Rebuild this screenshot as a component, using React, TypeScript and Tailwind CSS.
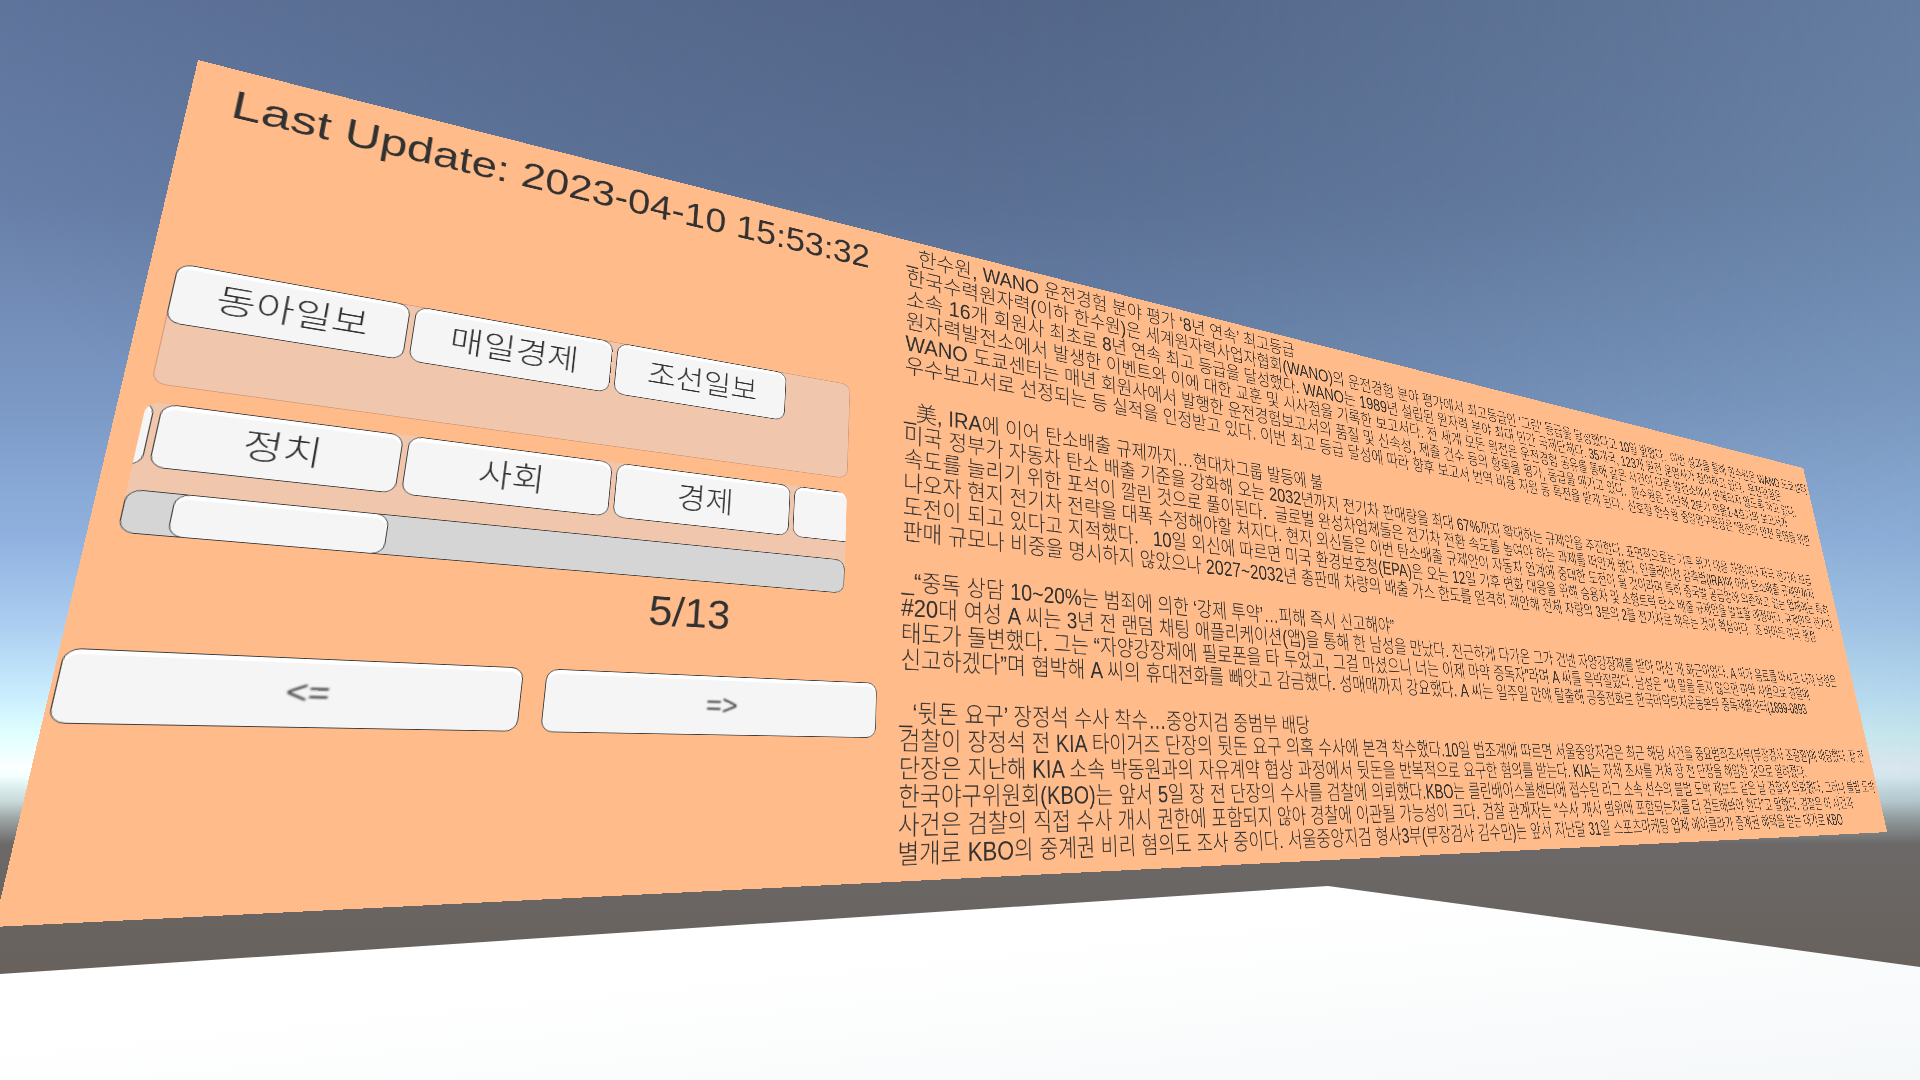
import { useLayoutEffect, useState } from "react";

type Point = [number, number];

const VIEW_W = 1920;
const VIEW_H = 1080;
const BOARD_W = 3720;
const BOARD_H = 1000;

// Screen-space corners of the board for a 1920x1080 view: TL, TR, BR, BL.
const CORNERS: Point[] = [
  [198, 60],
  [1803, 468],
  [1887, 832],
  [-6, 927],
];

// Homography from the board's own rectangle to its four projected corners.
function project([p0, p1, p2, p3]: Point[], w: number, h: number): string {
  const dx1 = p1[0] - p2[0];
  const dx2 = p3[0] - p2[0];
  const sx = p0[0] - p1[0] + p2[0] - p3[0];
  const dy1 = p1[1] - p2[1];
  const dy2 = p3[1] - p2[1];
  const sy = p0[1] - p1[1] + p2[1] - p3[1];
  const den = dx1 * dy2 - dx2 * dy1;
  const g = (sx * dy2 - dx2 * sy) / den;
  const k = (dx1 * sy - sx * dy1) / den;
  const a = p1[0] - p0[0] + g * p1[0];
  const b = p3[0] - p0[0] + k * p3[0];
  const d = p1[1] - p0[1] + g * p1[1];
  const e = p3[1] - p0[1] + k * p3[1];
  const m = [a / w, d / w, 0, g / w, b / h, e / h, 0, k / h, 0, 0, 1, 0, p0[0], p0[1], 0, 1];
  return `matrix3d(${m.join(",")})`;
}

function useCamera() {
  const [size, setSize] = useState({ w: VIEW_W, h: VIEW_H });
  useLayoutEffect(() => {
    const read = () => setSize({ w: window.innerWidth, h: window.innerHeight });
    read();
    window.addEventListener("resize", read);
    return () => window.removeEventListener("resize", read);
  }, []);
  const s = size.h / VIEW_H;
  const shift = (size.w - VIEW_W * s) / 2;
  return project(
    CORNERS.map(([x, y]): Point => [x * s + shift, y * s]),
    BOARD_W,
    BOARD_H,
  );
}

const ARTICLES: string[][] = [
  [
    "_한수원, WANO 운전경험 분야 평가 ‘8년 연속’ 최고등급",
    "한국수력원자력(이하 한수원)은 세계원자력사업자협회(WANO)의 운전경험 분야 평가에서 최고등급인 ‘그린’ 등급을 달성했다고 10일 밝혔다.  이번 성과를 통해 한수원은 WANO 도쿄센터",
    "소속 16개 회원사 최초로 8년 연속 최고 등급을 달성했다. WANO는 1989년 설립된 원자력 분야 최대 민간 국제단체다. 35개국, 123개 원전 운영사가 참여하고 있다.  운전경험은",
    "원자력발전소에서 발생한 이벤트와 이에 대한 교훈 및 시사점을 기록한 보고서다. 전 세계 모든 원전은 운전경험 공유를 통해 같은 사건이 다른 발전소에서 반복되지 않도록 하고 있다.",
    "WANO 도쿄센터는 매년 회원사에서 발행한 운전경험보고서의 품질 및 신속성, 제출 건수 등의 항목을 평가, 등급을 매기고 있다.  한수원은 지난해 2분기 한울1·4호기의 보고서가",
    "우수보고서로 선정되는 등 실적을 인정받고 있다. 이번 최고 등급 달성에 따라 향후 보고서 번역 비용 지원 등 특전을 받게 된다.  신호철 한수원 중앙연구원장은 “원전의 안전 운영을 위한",
  ],
  [
    "_美, IRA에 이어 탄소배출 규제까지…현대차그룹 발등에 불",
    "미국 정부가 자동차 탄소 배출 기준을 강화해 오는 2032년까지 전기차 판매량을 최대 67%까지 확대하는 규제안을 추진한다. 표면적으로는 기후 위기 대응 차원이나 자국 전기차 보급",
    "속도를 늘리기 위한 포석이 깔린 것으로 풀이된다.  글로벌 완성차업체들은 전기차 전환 속도를 높여야 하는 과제를 떠안게 됐다. 인플레이션 감축법(IRA)에 이어 탄소배출 규제안까지",
    "나오자 현지 전기차 전략을 대폭 수정해야할 처지다. 현지 외신들은 이번 탄소배출 규제안이 자동차 업계에 중대한 도전이 될 것이라며 특히 중국발 공급망에 의존하고 있는 업체에는 특히",
    "도전이 되고 있다고 지적했다.   10일 외신에 따르면 미국 환경보호청(EPA)은 오는 12일 기후 변화 대응을 위해 승용차 및 소형트럭 탄소 배출 규제안을 발표할 예정이다. 규제안은 전기차",
    "판매 규모나 비중을 명시하지 않았으나 2027~2032년 총판매 차량의 배출 가스 한도를 엄격히 제안해 전체 차량의 3분의 2를 전기차로 채우는 것이 핵심이다.  조 바이든 미국 행정",
  ],
  [
    "_“중독 상담 10~20%는 범죄에 의한 ‘강제 투약’…피해 즉시 신고해야”",
    "#20대 여성 A 씨는 3년 전 랜덤 채팅 애플리케이션(앱)을 통해 한 남성을 만났다. 친근하게 다가온 그가 건넨 자양강장제를 받아 마신 게 화근이었다. A 씨가 음료를 마시고 나자 남성은",
    "태도가 돌변했다. 그는 “자양강장제에 필로폰을 타 두었고, 그걸 마셨으니 너는 이제 마약 중독자”라며 A 씨를 윽박질렀다. 남성은 “내 말을 듣지 않으면 마약 사범으로 경찰에",
    "신고하겠다”며 협박해 A 씨의 휴대전화를 빼앗고 감금했다. 성매매까지 강요했다. A 씨는 일주일 만에 탈출해 공중전화로 한국마약퇴치운동본부 중독재활센터(1899-0893",
  ],
  [
    "_‘뒷돈 요구’ 장정석 수사 착수…중앙지검 중범부 배당",
    "검찰이 장정석 전 KIA 타이거즈 단장의 뒷돈 요구 의혹 수사에 본격 착수했다.10일 법조계에 따르면 서울중앙지검은 최근 해당 사건을 중요범죄조사부(부장검사 조광환)에 배당했다. 장 전",
    "단장은 지난해 KIA 소속 박동원과의 자유계약 협상 과정에서 뒷돈을 반복적으로 요구한 혐의를 받는다. KIA는 자체 조사를 거쳐 장 전 단장을 해임한 것으로 알려졌다.",
    "한국야구위원회(KBO)는 앞서 5일 장 전 단장의 수사를 검찰에 의뢰했다.KBO는 클린베이스볼센터에 접수된 리그 소속 선수의 불법 도박 제보도 같은 날 검찰에 의뢰했다. 그러나 불법 도박",
    "사건은 검찰의 직접 수사 개시 권한에 포함되지 않아 경찰에 이관될 가능성이 크다. 검찰 관계자는 “수사 개시 범위에 포함되는지를 더 검토해봐야 한다”고 말했다. 검찰은 이 사건과",
    "별개로 KBO의 중계권 비리 혐의도 조사 중이다. 서울중앙지검 형사3부(부장검사 김수민)는 앞서 지난달 31일 스포츠마케팅 업체 에이클라가 중계권 혜택을 받는 대가로 KBO",
  ],
];

const SURFACE =
  "rounded-[14px] border border-[#3c3c3c] bg-[#f5f5f5] shadow-[inset_0_5px_0_#ffffff]";

function TabKey({ label }: { label: string }) {
  return (
    <button
      type="button"
      className={`${SURFACE} h-[76px] w-[239px] shrink-0 text-[42px] leading-none font-light`}
    >
      {label}
    </button>
  );
}

function PageKey({ label, name }: { label: string; name: string }) {
  return (
    <button
      type="button"
      aria-label={name}
      className={`${SURFACE} h-[78px] w-[439px] shrink-0 text-[36px] leading-none text-[#444444]`}
    >
      <span className="blur-[1px]">{label}</span>
    </button>
  );
}

function Backdrop() {
  return (
    <div
      aria-hidden="true"
      className="absolute inset-0 bg-[linear-gradient(to_bottom,#6b6867_79%,#68615c_90%)]"
    >
      <div className="absolute inset-x-0 top-0 h-[79%] bg-[linear-gradient(to_bottom,rgba(107,104,103,0)_91%,rgba(107,104,103,0.25)_94%,rgba(107,104,103,0.6)_96%,#6b6867_99%),linear-gradient(to_right,rgba(125,160,190,0)_50%,rgba(125,160,190,0.28)_100%),radial-gradient(ellipse_62%_80%_at_58%_0%,rgba(64,80,108,0.45),rgba(64,80,108,0.3)_45%,rgba(64,80,108,0)_100%),linear-gradient(to_bottom,#60759d_0%,#677fa8_23%,#7b98c4_47%,#90b1df_63%,#aacdf0_73%,#ccefff_82%,#dffffe_86%,#fbffff_90%,#e6ffff_93%)]" />
      <svg className="absolute inset-0 h-full w-full" viewBox="0 0 1920 1080" preserveAspectRatio="none">
        <defs>
          <linearGradient id="floor" x1="0" y1="0" x2="1" y2="1">
            <stop offset="0.4" stopColor="#ffffff" />
            <stop offset="1" stopColor="#f5f8f9" />
          </linearGradient>
        </defs>
        <polygon points="0,974 1328,886 1920,967 1920,1080 0,1080" fill="url(#floor)" />
      </svg>
    </div>
  );
}

export default function App() {
  const transform = useCamera();
  return (
    <main className="relative h-screen w-full overflow-hidden font-['Liberation_Sans','Noto_Sans_CJK_KR',sans-serif] text-[#323232]">
      <Backdrop />
      <section
        aria-label="News board"
        className="absolute left-0 top-0 flex h-[1000px] w-[3720px] origin-top-left bg-[#ffbb8a] will-change-transform"
        style={{ transform }}
      >
        <div className="flex w-[944px] shrink-0 flex-col">
          <h1 className="mt-4 ml-[42px] h-[257px] text-[55px] leading-[64px] whitespace-nowrap">
            Last Update: 2023-04-10 15:53:32
          </h1>
          <nav
            aria-label="Newspapers"
            className="ml-[25px] flex h-[152px] w-[829px] items-start gap-1.5 rounded-[14px] bg-[#f0c6ad] inset-ring inset-ring-[#d39c7c]"
          >
            {["동아일보", "매일경제", "조선일보"].map((name) => (
              <TabKey key={name} label={name} />
            ))}
          </nav>
          <div
            id="sections"
            className="mt-[22px] ml-[25px] flex h-[153px] w-[829px] flex-col justify-between overflow-hidden rounded-[14px] bg-[#f0c6ad]"
          >
            <nav aria-label="Sections" className="-ml-[231px] flex gap-1.5">
              {["", "정치", "사회", "경제", " "].map((name) => (
                <TabKey key={name} label={name} />
              ))}
            </nav>
            <div
              role="scrollbar"
              aria-label="Scroll sections"
              aria-controls="sections"
              aria-valuenow={7}
              className="flex h-[50px] rounded-[14px] border border-[#3c3c3c] bg-[#d5d5d5] pl-[42px]"
            >
              <div className={`${SURFACE} -my-px w-[208px]`} />
            </div>
          </div>
          <p className="mt-[12px] ml-[585px] text-[55px] leading-[64px]">5/13</p>
          <div className="mt-[51px] ml-1 flex gap-[26px]">
            <PageKey label="<=" name="Previous page" />
            <PageKey label="=>" name="Next page" />
          </div>
        </div>
        <div className="flex flex-col gap-[39px] pt-[9px] text-[36px] leading-[39px] font-light">
          {ARTICLES.map((lines) => (
            <article key={lines[0]} className="whitespace-pre">
              {lines.map((line) => (
                <p key={line} className="h-[39px]">
                  {line}
                </p>
              ))}
            </article>
          ))}
        </div>
      </section>
    </main>
  );
}
